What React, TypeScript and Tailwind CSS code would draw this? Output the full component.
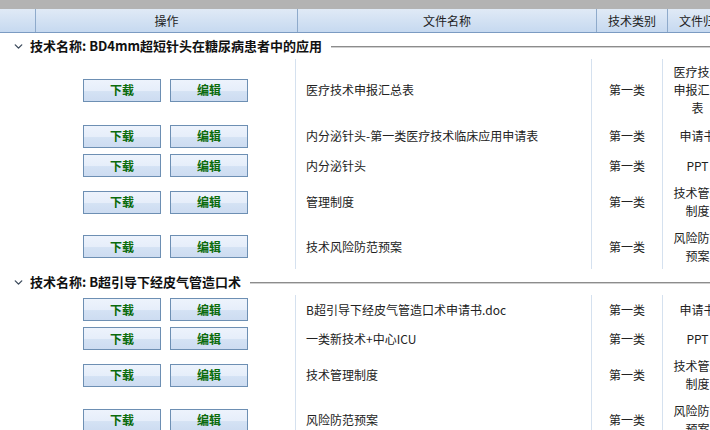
import { ChevronDown } from 'lucide-react';

type Row = { name: string; kind: string; file: string; h: string };
type Group = { title: string; rows: Row[] };

const groups: Group[] = [
  {
    title: 'BD4mm超短针头在糖尿病患者中的应用',
    rows: [
      { name: '医疗技术申报汇总表', kind: '第一类', file: '医疗技术申报汇总表', h: 'h-[62px]' },
      { name: '内分泌针头-第一类医疗技术临床应用申请表', kind: '第一类', file: '申请书', h: 'h-[30px]' },
      { name: '内分泌针头', kind: '第一类', file: 'PPT', h: 'h-[29px]' },
      { name: '管理制度', kind: '第一类', file: '技术管理制度', h: 'h-[44px]' },
      { name: '技术风险防范预案', kind: '第一类', file: '风险防范预案', h: 'h-[45px]' },
    ],
  },
  {
    title: 'B超引导下经皮气管造口术',
    rows: [
      { name: 'B超引导下经皮气管造口术申请书.doc', kind: '第一类', file: '申请书', h: 'h-[29px]' },
      { name: '一类新技术+中心ICU', kind: '第一类', file: 'PPT', h: 'h-[29px]' },
      { name: '技术管理制度', kind: '第一类', file: '技术管理制度', h: 'h-[44px]' },
      { name: '风险防范预案', kind: '第一类', file: '风险防范预案', h: 'h-[46px]' },
    ],
  },
];

function Btn({ label }: { label: string }) {
  return (
    <button className="w-[78px] h-[23px] border border-[#6d8fb3] bg-[linear-gradient(to_bottom,#edf3fc_0%,#e6eefa_50%,#d4e2f4_55%,#cddcf1_100%)] text-[12px] font-bold text-[#0b6b0b] leading-none">
      {label}
    </button>
  );
}

export default function App() {
  return (
    <div
      className="w-[710px] h-[430px] overflow-hidden bg-white text-[12px] text-[#222]"
      style={{ fontFamily: '"Microsoft YaHei", "Noto Sans CJK SC", sans-serif' }}
    >
      {/* top strip */}
      <div className="h-[9px] bg-[#b3b3b3]" />

      {/* header */}
      <div className="flex h-[24px] border-b border-[#7b9bc2] bg-gradient-to-b from-[#e0eaf6] to-[#c6d9f0] w-[760px]">
        <div className="w-[36px] border-r border-[#8eaacb]" />
        <div className="w-[262px] flex items-center justify-center border-r border-[#8eaacb]">操作</div>
        <div className="w-[299px] flex items-center justify-center border-r border-[#8eaacb]">文件名称</div>
        <div className="w-[71px] flex items-center justify-center border-r border-[#8eaacb]">技术类别</div>
        <div className="w-[70px] flex items-center justify-center">文件归档</div>
      </div>

      {groups.map((g) => (
        <div key={g.title}>
          <div className="flex items-center h-[26px] pl-[12px] w-[760px]">
            <ChevronDown className="w-[13px] h-[13px] text-[#3d4b5c] mr-[5px]" strokeWidth={2.5} />
            <span className="font-bold text-[13px] text-[#111] whitespace-nowrap">技术名称: {g.title}</span>
            <div className="flex-1 ml-[9px] mt-[1px] h-[2px] border-t border-[#8c8c8c] bg-[#d0d0d0]" />
          </div>
          {g.rows.map((r, i) => (
            <div key={i} className={`flex w-[760px] ${r.h}`}>
              <div className="w-[36px]" />
              <div className="w-[259px] flex items-center justify-center gap-[9px]">
                <Btn label="下载" />
                <Btn label="编辑" />
              </div>
              <div className="w-[296px] flex items-center pl-[10px] border-l border-[#d5e1ef]">{r.name}</div>
              <div className="w-[71px] flex items-center justify-center border-l border-[#d5e1ef]">{r.kind}</div>
              <div className="w-[70px] flex items-center justify-center border-l border-[#d5e1ef] px-[10px]">
                <span className="text-center leading-[18px] break-all">{r.file}</span>
              </div>
            </div>
          ))}
        </div>
      ))}
    </div>
  );
}
